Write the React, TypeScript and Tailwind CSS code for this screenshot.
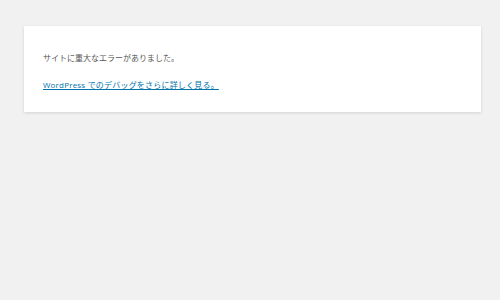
import React from 'react';

const App: React.FC = () => {
  return (
    <div className="min-h-[300px] w-[500px] bg-[#f1f1f1] pt-[26px] pl-[24px] font-['Open_Sans','Noto_Sans_CJK_JP',sans-serif]">
      <div className="w-[457px] h-[86px] bg-white shadow-[0_1px_3px_rgba(0,0,0,0.13)] px-[19px] pt-[26px] text-[8px] leading-[12px]">
        <p className="text-[#555]">サイトに重大なエラーがありました。</p>
        <p className="mt-[15px]">
          <a href="#" className="text-[#0073aa] underline tracking-[0.2px]">WordPress でのデバッグをさらに詳しく見る。</a>
        </p>
      </div>
    </div>
  );
};

export default App;
